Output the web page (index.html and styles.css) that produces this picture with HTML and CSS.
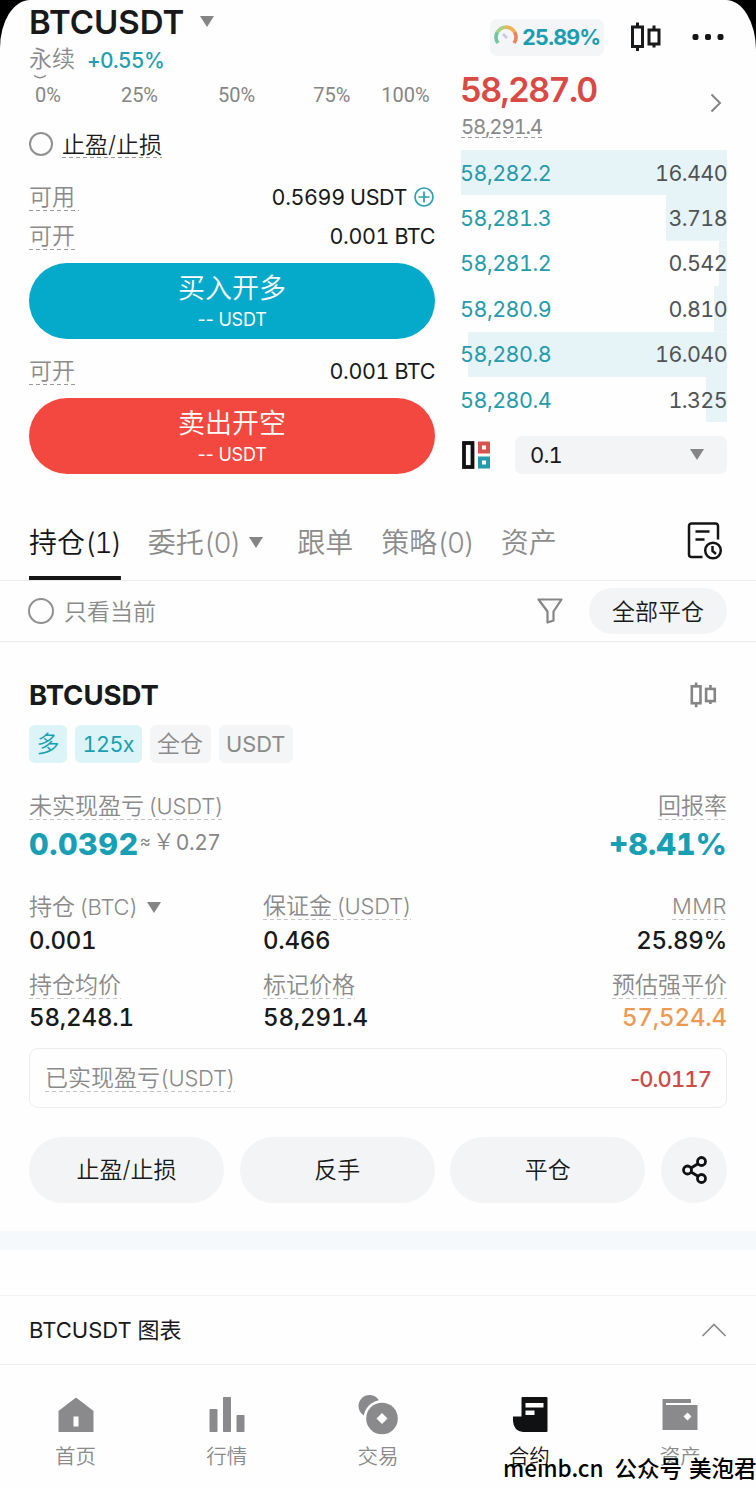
FILE: index.html
```html
<!DOCTYPE html>
<html lang="zh-CN">
<head>
<meta charset="utf-8">
<title>BTCUSDT 永续</title>
<link rel="stylesheet" href="styles.css">
</head>
<body>
<svg class="defs" width="0" height="0" aria-hidden="true">
  <symbol id="candles" viewBox="0 0 30 30">
    <g fill="none" stroke="currentColor" stroke-width="3"><rect x="1.500" y="5" width="10" height="19.500"/><rect x="18" y="8" width="10" height="14"/><path d="M6.500 0.500v4.500M6.500 24.500v4.500M23 3.500v4.500M23 22v3.500"/></g>
  </symbol>
</svg>
<div class="screen">
  <header class="header">
    <div class="pair">
      <div class="pair-row"><h1 class="pair-name">BTCUSDT</h1><i class="caret"></i></div>
      <div class="pair-sub"><span class="perp">永续</span><span class="change">+0.55%</span></div>
    </div>
    <div class="tools">
      <div class="risk">
        <svg width="24" height="24" viewBox="0 0 24 24" fill="none" stroke-width="3.600"><path d="M4 18A10 10 0 0 1 3.500 7" stroke="#70c5a0"/><path d="M3.500 7A10 10 0 0 1 11 2.200" stroke="#a9cf83"/><path d="M11 2.200A10 10 0 0 1 20.500 7" stroke="#edb158"/><path d="M20.500 7A10 10 0 0 1 20 18" stroke="#e88460"/><path d="M9 9l4 4" stroke="#c9c9dc" stroke-width="2.500"/></svg>
        <span class="risk-num">25.89%</span>
      </div>
      <svg class="tool-candles" width="30" height="30"><use href="#candles"/></svg>
      <svg class="dots" width="32" height="8" viewBox="0 0 32 8" fill="#151515"><rect x="0.500" y="1" width="6" height="6" rx="2"/><rect x="13" y="1" width="6" height="6" rx="2"/><rect x="25.500" y="1" width="6" height="6" rx="2"/></svg>
    </div>
  </header>

  <div class="trade">
    <section class="order">
      <svg class="knob" width="14" height="5" viewBox="0 0 14 5"><path d="M1 0.500Q7 5 13 0.500" fill="none" stroke="#8a8a8a" stroke-width="1.500"/></svg>
      <div class="scale"><span>0%</span><span class="s25">25%</span><span class="s50">50%</span><span class="s75">75%</span><span class="s100">100%</span></div>
      <div class="tpsl"><i class="radio"></i><span class="dash dark">止盈/止损</span></div>
      <div class="kv avail"><span class="dash shifted">可用</span><span class="kv-val">0.5699 USDT<svg width="20" height="20" viewBox="0 0 20 20" fill="none" stroke="#2a9fb0" stroke-width="1.700"><circle cx="10" cy="10" r="9"/><path d="M10 4.500v11M4.500 10h11"/></svg></span></div>
      <div class="kv open"><span class="dash">可开</span><span class="kv-val">0.001 BTC</span></div>
      <button class="cta buy"><span class="cta-main">买入开多</span><span class="cta-sub">-- USDT</span></button>
      <div class="kv open2"><span class="dash">可开</span><span class="kv-val">0.001 BTC</span></div>
      <button class="cta sell"><span class="cta-main">卖出开空</span><span class="cta-sub">-- USDT</span></button>
    </section>
    <section class="book">
      <div class="last">
        <div><div class="last-price">58,287.0</div><span class="dash mark">58,291.4</span></div>
        <svg class="chev" width="12" height="20" viewBox="0 0 12 20" fill="none" stroke="#858585" stroke-width="2"><path d="M1.500 1.500L10 10l-8.500 8.500"/></svg>
      </div>
      <div class="rows">
        <div class="row" style="--d:100%"><span class="p">58,282.2</span><span class="q">16.440</span></div>
        <div class="row" style="--d:23%"><span class="p">58,281.3</span><span class="q">3.718</span></div>
        <div class="row" style="--d:3%"><span class="p">58,281.2</span><span class="q">0.542</span></div>
        <div class="row" style="--d:5%"><span class="p">58,280.9</span><span class="q">0.810</span></div>
        <div class="row" style="--d:97.500%"><span class="p">58,280.8</span><span class="q">16.040</span></div>
        <div class="row" style="--d:8%"><span class="p">58,280.4</span><span class="q">1.325</span></div>
      </div>
      <div class="step">
        <svg width="30" height="28" viewBox="0 0 30 28" fill="none"><rect x="2" y="2" width="8.500" height="24" stroke="#111" stroke-width="3.800"/><rect x="18" y="2.500" width="8" height="8" stroke="#d9544f" stroke-width="4"/><rect x="18" y="17.500" width="8" height="8" stroke="#259bab" stroke-width="4"/></svg>
        <div class="select"><span>0.1</span><i class="caret"></i></div>
      </div>
    </section>
  </div>

  <nav class="tabs">
    <span class="tab on">持仓<span class="n">(1)</span></span><span class="tab t2">委托<span class="n">(0)</span><i class="caret"></i></span><span class="tab t3">跟单</span><span class="tab t4">策略<span class="n">(0)</span></span><span class="tab t5">资产</span>
    <svg class="history" width="36" height="38" viewBox="0 0 36 38" fill="none" stroke="#151515" stroke-width="2.500"><path d="M15.500 35H4.500a2.500 2.500 0 0 1-2.500-2.500V4A2.500 2.500 0 0 1 4.500 1.500h24A2.500 2.500 0 0 1 31 4v13.500M8.500 9.500h14M8.500 17.500h9"/><circle cx="26" cy="28.500" r="7.800"/><path d="M25.500 24v5l3.500 3"/></svg>
  </nav>
  <div class="filter">
    <i class="radio big"></i><span class="only">只看当前</span>
    <svg class="funnel" width="26" height="26" viewBox="0 0 26 26" fill="none" stroke="#858585" stroke-width="2.200" stroke-linejoin="round"><path d="M1.500 1.500h23L16.500 13.500v9L10.500 24.500v-11z"/></svg>
    <button class="close-all">全部平仓</button>
  </div>

  <section class="card">
    <div class="card-head"><h2>BTCUSDT</h2><svg class="card-candles" width="27" height="26"><use href="#candles"/></svg></div>
    <div class="tags"><span class="tag cyan">多</span><span class="tag cyan lev">125x</span><span class="tag">全仓</span><span class="tag quote">USDT</span></div>
    <div class="pnl">
      <div><span class="dash pale">未实现盈亏<span class="lat"> (USDT)</span></span><div class="pnl-val"><b>0.0392</b><span class="approx">≈</span><span class="yen">￥</span><span class="cny">0.27</span></div></div>
      <div class="right"><span class="dash pale">回报率</span><div class="pnl-val"><b class="roi">+8.41%</b></div></div>
    </div>
    <div class="grid">
      <div><span class="label">持仓<span class="lat"> (BTC)</span><i class="caret"></i></span><div class="val">0.001</div></div>
      <div><span class="dash pale">保证金<span class="lat"> (USDT)</span></span><div class="val">0.466</div></div>
      <div class="right"><span class="dash pale"><span class="lat mmr">MMR</span></span><div class="val">25.89%</div></div>
    </div>
    <div class="grid second">
      <div><span class="dash pale">持仓均价</span><div class="val">58,248.1</div></div>
      <div><span class="dash pale">标记价格</span><div class="val">58,291.4</div></div>
      <div class="right"><span class="dash pale">预估强平价</span><div class="val orange">57,524.4</div></div>
    </div>
    <div class="realized"><span class="dash pale">已实现盈亏<span class="lat">(USDT)</span></span><span class="loss"><span class="minus">-</span>0.0117</span></div>
    <div class="actions">
      <button>止盈/止损</button><button>反手</button><button>平仓</button>
      <button class="share"><svg width="26" height="28" viewBox="0 0 26 28" fill="none" stroke="#111" stroke-width="2.800"><circle cx="5.500" cy="14" r="4"/><circle cx="19.500" cy="5.500" r="4"/><circle cx="19.500" cy="22.500" r="4"/><path d="M9 12l7-4.300M9 16l7 4.300"/></svg></button>
    </div>
  </section>
  <div class="band"></div>
  <div class="chart-bar"><span>BTCUSDT 图表</span><svg width="26" height="16" viewBox="0 0 26 16" fill="none" stroke="#8a8a8a" stroke-width="1.700"><path d="M1.500 14L13 2.500 24.500 14"/></svg></div>

  <footer class="nav">
    <div class="item"><svg width="40" height="40" viewBox="0 0 40 40"><path d="M20 2.500L37.500 16v20.500q0 .5-.5.500h-34q-.5 0-.5-.500V16zM17.500 21.500v10h5v-10z" fill="#8a8a8c" fill-rule="evenodd"/></svg><span>首页</span></div>
    <div class="item"><svg width="40" height="40" viewBox="0 0 40 40" fill="#8a8a8c"><rect x="2.500" y="14" width="8" height="23" rx=".7"/><rect x="16" y="2" width="8" height="35" rx=".7"/><rect x="29.500" y="20" width="8" height="17" rx=".7"/></svg><span>行情</span></div>
    <div class="item"><svg width="40" height="40" viewBox="0 0 40 40"><circle cx="11.500" cy="11" r="11" fill="#8a8a8c"/><circle cx="24" cy="23.500" r="18.500" fill="#fefefe"/><circle cx="24" cy="23.500" r="15.800" fill="#8a8a8c"/><path d="M24 18l5.500 5.500L24 29l-5.500-5.500z" fill="#fefefe"/></svg><span>交易</span></div>
    <div class="item active"><svg width="40" height="40" viewBox="0 0 40 40"><path d="M13.500 2h24q1 0 1 1v33q0 1-1 1H14Q4.500 36 4 26v-4.500h8.500V3q0-1 1-1zM16.500 8v4.500h18V8zM16.500 15.500V20h9v-4.500z" fill="#101112" fill-rule="evenodd"/></svg><span>合约</span></div>
    <div class="item"><svg width="40" height="40" viewBox="0 0 40 40"><path d="M3 4h27q1 0 1 1v3H6v2h31.500v24.500q0 .5-.5.500H3q-.5 0-.5-.500V4.500q0-.5.500-.5zM27.500 17.500l-4 4 4 4 4-4z" fill="#8a8a8c" fill-rule="evenodd"/></svg><span>资产</span></div>
  </footer>
  <div class="watermark"><span class="w1">meinb.cn</span><span class="w2">公众号</span><span class="w3">美泡君</span></div>
</div>
</body>
</html>
```
FILE: styles.css
```css
* { box-sizing: border-box; }
body { margin: 0; background: #000; }
h1, h2 { margin: 0; }
button { border: 0; padding: 0; font: inherit; color: inherit; }
svg { display: block; flex: none; }
.defs { position: absolute; }
.screen {
  position: relative; width: 756px; height: 1488px; overflow: hidden;
  display: flex; flex-direction: column;
  background: #fefefe; color: #18191b;
  border-radius: 30px 30px 0 0 / 48px 50px 0 0;
  font-family: Inter, "Noto Sans CJK SC", sans-serif;
  font-size: 22px; font-weight: 400; white-space: nowrap;
  font-feature-settings: "tnum";
}
.caret { display: inline-block; width: 0; height: 0; border: 7px solid transparent; border-top: 11px solid #858585; border-bottom: 0; }
.radio { width: 24px; height: 24px; border: 2px solid #909090; border-radius: 50%; flex: none; }
.radio.big { width: 26px; height: 26px; }
.dash {
  display: inline-block; height: 28px; line-height: 28px; color: #8a8a8a; font-size: 23px; font-weight: 350;
  background: repeating-linear-gradient(90deg, #999 0 4px, transparent 4px 7px) left bottom / 100% 1px no-repeat;
}
.dash.dark { color: #1b1b1b; line-height: 30px; }
.dash.pale { background-image: repeating-linear-gradient(90deg, #c4c4c4 0 4px, transparent 4px 7px); line-height: 29px; }
.lat { font-size: 22px; letter-spacing: -0.200px; word-spacing: -1.500px; }
.mmr { letter-spacing: 0.450px; }

.header { height: 76px; padding: 0 32px 0 29px; display: flex; justify-content: space-between; flex: none; }
.pair-row { height: 44px; display: flex; align-items: center; gap: 16px; }
.pair-name { font-size: 33px; font-weight: 600; line-height: 44px; }
.pair-row .caret { margin-top: -2px; }
.pair-sub { display: flex; align-items: center; height: 32px; gap: 12px; }
.perp { color: #8a8a8a; font-size: 23px; font-weight: 350; line-height: 30px; margin-top: -3px; }
.change { color: #229eb0; font-size: 21px; font-weight: 500; letter-spacing: -0.600px; padding-top: 1px; }
.tools { display: flex; align-items: center; height: 74px; }
.risk { width: 114px; height: 37px; display: flex; align-items: center; gap: 4px; padding-left: 4px; border-radius: 7px; background: #f3f5f6; }
.risk-num { color: #1b9db1; font-size: 21.500px; font-weight: 700; letter-spacing: -0.800px; }
.tool-candles { margin: 0 31px 0 27px; }

.trade { display: flex; height: 398px; padding: 0 29px; justify-content: space-between; flex: none; }
.order { width: 406px; position: relative; }
.knob { position: absolute; left: 4px; top: -1px; }
.scale { height: 38px; font: 400 20px/38px Roboto, sans-serif; color: #858585; display: flex; padding-left: 6px; }
.s25, .s50 { margin-left: 60px; }
.s75 { margin-left: 58px; }
.s100 { margin-left: 31px; }
.tpsl { height: 60px; margin-bottom: 4px; display: flex; align-items: center; gap: 9px; }
.kv { display: flex; justify-content: space-between; align-items: center; }
.kv-val { display: flex; align-items: center; font-size: 21.500px; gap: 7px; letter-spacing: -0.400px; }
.avail { height: 38px; padding-right: 1px; }
.avail .dash { padding-right: 4px; }
.open { height: 40px; margin-bottom: 7px; }
.open2 { height: 59px; padding-top: 5px; }
.cta { width: 406px; height: 76px; border-radius: 38px; color: #fff; display: flex; flex-direction: column; align-items: center; }
.buy { background: #05a9c9; }
.sell { background: #f3483f; }
.cta-main { font-size: 27px; line-height: 34px; margin-top: 9px; font-weight: 350; }
.cta-sub { font-size: 18px; line-height: 22px; margin-top: 3px; font-feature-settings: normal; letter-spacing: -0.200px; }
.book { width: 266px; }
.last { display: flex; justify-content: space-between; height: 74px; padding-right: 5px; }
.last-price { font-size: 34px; font-weight: 600; line-height: 28px; color: #d94a45; letter-spacing: -1.700px; margin-left: -1px; }
.mark { font-size: 20.500px; line-height: 28px; height: 25px; margin-top: 9px; font-weight: 400; letter-spacing: -1.250px; }
.chev { margin-top: 17px; }
.row { height: 45.400px; display: flex; justify-content: space-between; align-items: center; background: linear-gradient(#e6f4f8, #e6f4f8) right / var(--d) 100% no-repeat; font-size: 21.500px; }
.p { color: #259bab; letter-spacing: -0.500px; margin-left: -1px; }
.q { color: #505355; letter-spacing: -0.600px; }
.step { display: flex; justify-content: space-between; align-items: center; margin-top: 13.500px; }
.step > svg { margin-left: 1px; }
.select { width: 212px; height: 38px; border-radius: 7px; background: #f3f4f6; display: flex; align-items: center; justify-content: space-between; padding: 0 23px 0 15px; letter-spacing: -0.800px; }

.tabs { height: 107px; border-bottom: 1px solid #ececee; display: flex; padding: 0 33px 0 29px; flex: none; font-size: 28px; color: #8c8c8c; font-weight: 350; }
.tab { line-height: 138px; height: 106px; }
.tab.on { color: #151515; background: linear-gradient(#151515, #151515) bottom / 100% 4px no-repeat; }
.n { letter-spacing: -1.200px; }
.on .n { letter-spacing: -1.400px; }
.t2 { margin-left: 27px; }
.t2 .caret { margin-left: 9px; vertical-align: 5px; }
.t3 { margin-left: 34px; }
.t4 { margin-left: 28px; }
.t5 { margin-left: 27px; }
.history { margin: 48px 0 0 auto; }
.filter { height: 61px; border-bottom: 1px solid #ececee; display: flex; align-items: center; padding: 0 29px 0 28px; flex: none; }
.only { margin: -3px 0 0 10px; font-size: 23px; color: #8a8a8a; font-weight: 350; }
.funnel { margin-left: auto; margin-right: 26px; }
.close-all { width: 138px; height: 46px; border-radius: 23px; background: #f3f4f6; font-size: 23px; font-weight: 350; padding-bottom: 2px; }

.card { padding: 0 29px; height: 589px; flex: none; }
.card-head { display: flex; align-items: center; justify-content: space-between; padding-right: 10px; height: 105px; }
.card-candles { color: #858585; }
.card h2 { font-size: 27.500px; font-weight: 700; }
.tags { display: flex; gap: 8px; margin-top: -22px; }
.tag { height: 38px; line-height: 38px; padding: 0 7.500px; border-radius: 6px; background: #f4f5f6; color: #8a8a8a; font-size: 23px; font-weight: 350; }
.tag.cyan { background: #dcf3f8; color: #1b9fb3; }
.tag.lev, .tag.quote { font-size: 21.500px; font-weight: 400; line-height: 39px; }
.tag.lev { letter-spacing: -0.500px; }
.tag.quote { font-size: 21.800px; }
.pnl { display: flex; justify-content: space-between; margin-top: 29px; height: 100px; }
.right { text-align: right; }
.pnl-val { display: flex; align-items: center; height: 34px; margin-top: 6px; color: #868686; }
.pnl-val b { color: #189fb4; font-size: 30.500px; font-weight: 800; letter-spacing: 0.500px; }
.pnl-val .roi { letter-spacing: 0; }
.approx { font-size: 17px; margin-left: 1px; margin-top: -4px; }
.yen { margin-left: 2px; font-size: 22px; line-height: 30px; margin-top: -4px; font-weight: 350; }
.cny { font-size: 21px; letter-spacing: -0.400px; margin-left: 1px; margin-top: -2px; }
.grid { display: grid; grid-template-columns: 234px 1fr auto; height: 79px; }
.label { display: inline-block; height: 28px; line-height: 31px; color: #8a8a8a; font-size: 23px; font-weight: 350; }
.label .caret { margin-left: 9px; vertical-align: 2px; }
.val { font-size: 24px; font-weight: 500; line-height: 30px; margin-top: 6px; letter-spacing: -0.300px; }
.second { height: 77px; }
.second .val { margin-top: 4px; letter-spacing: -0.150px; }
.orange { color: #ec9a52; }
.realized { height: 60px; border: 1px solid #ececee; border-radius: 9px; padding: 0 15px; display: flex; justify-content: space-between; align-items: center; }
.loss { color: #cc4b49; font-weight: 500; letter-spacing: -0.900px; padding-top: 2px; }
.minus { font-feature-settings: normal; }
.actions { display: flex; justify-content: space-between; margin-top: 29px; }
.actions button { width: 195px; height: 66px; border-radius: 33px; background: #f3f4f6; font-size: 23px; font-weight: 350; padding-bottom: 4px; }
.actions .share { width: 66px; display: grid; place-items: center; padding: 0 0 0 2px; }
.band { height: 19px; background: #f5f9fb; flex: none; }
.chart-bar { margin-top: 45px; height: 70px; border-top: 1px solid #f2f2f3; border-bottom: 1px solid #ececee; display: flex; align-items: center; justify-content: space-between; padding: 0 29px; font-size: 22px; flex: none; }
.chart-bar span { padding-bottom: 4px; font-weight: 380; }
.nav { display: flex; height: 123px; padding-top: 30px; flex: none; }
.item { width: 151.200px; display: flex; flex-direction: column; align-items: center; font-size: 20.500px; color: #8a8a8a; font-weight: 350; }
.item span { line-height: 24px; margin-top: 10px; }
.item.active { color: #151515; }
.watermark { position: absolute; left: 503px; top: 1453px; width: 260px; display: flex; font: 500 22.500px/28px "Noto Sans CJK SC", sans-serif; color: #000; }
.w2 { margin-left: 11px; }
.w3 { margin-left: 7px; }
```
